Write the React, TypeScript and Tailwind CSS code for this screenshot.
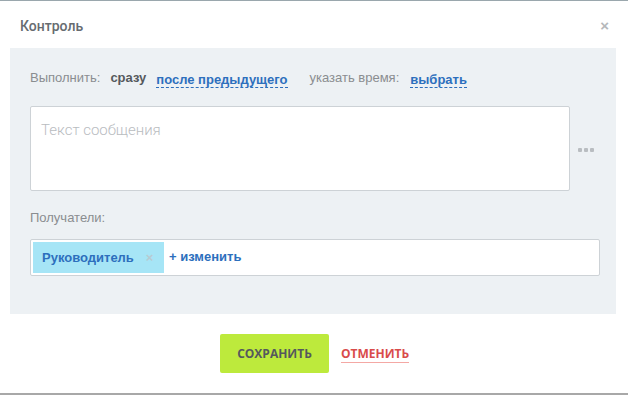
import React from "react";

const App: React.FC = () => {
  return (
    <div className="w-[628px] h-[395px] bg-white flex flex-col overflow-hidden font-['Liberation_Sans',Arial,sans-serif]">
      <div className="h-px bg-[#9aa7ad]" />
      <div className="flex items-center justify-between h-[47px] pl-5 pr-[19px]">
        <span className="font-['Roboto',sans-serif] font-[500] text-[14px] text-[#666b70] pt-[3px]">
          Контроль
        </span>
        <span className="text-[15px] leading-none text-[#b5b8bb] font-bold pt-[2px]">×</span>
      </div>

      <div className="mx-[10px] w-[606px] h-[266px] bg-[#edf1f4] pl-5 pt-[20px] flex flex-col">
        <div className="flex items-center text-[13px] h-[20px]">
          <span className="text-[#8a8d90]">Выполнить:</span>
          <span className="ml-[10px] font-bold text-[#55595d]">сразу</span>
          <span className="ml-[10px] font-bold text-[#2d6fbd] border-b border-dashed border-[#2d6fbd] leading-[15px] mt-[3px]">
            после предыдущего
          </span>
          <span className="ml-[22px] text-[#8a8d90]">указать время:</span>
          <span className="ml-[11px] font-bold text-[#2d6fbd] border-b border-dashed border-[#2d6fbd] leading-[15px] mt-[3px]">
            выбрать
          </span>
        </div>

        <div className="flex items-center mt-[18px]">
          <div className="w-[540px] h-[85px] bg-white border border-[#cdd2d6] rounded-[2px] pl-[10px] pt-[11px]">
            <span className="font-['Roboto',sans-serif] font-light text-[15px] text-[#b9bcbf]">
              Текст сообщения
            </span>
          </div>
          <div className="ml-[8px] flex gap-[2px] mt-[2px]">
            <span className="w-[4px] h-[4px] bg-[#b9bdc1] rounded-[1px]" />
            <span className="w-[4px] h-[4px] bg-[#b9bdc1] rounded-[1px]" />
            <span className="w-[4px] h-[4px] bg-[#b9bdc1] rounded-[1px]" />
          </div>
        </div>

        <div className="mt-[17px] text-[13px] text-[#8a8d90] h-[16px]">Получатели:</div>

        <div className="mt-[15px] w-[570px] h-[37px] bg-white border border-[#cdd2d6] rounded-[2px] flex items-center pl-[2px]">
          <div className="h-[31px] w-[131px] bg-[#a6e5f6] flex items-center pl-[9px]">
            <span className="font-bold text-[13px] text-[#2d6fbd] mt-[1px]">Руководитель</span>
            <span className="ml-[12px] text-[13px] leading-none text-[#b8cbd2] font-bold">×</span>
          </div>
          <span className="ml-[5px] font-bold text-[13px] text-[#2d6fbd] mb-[1px]">+ изменить</span>
        </div>
      </div>

      <div className="flex items-center mt-[20px] pl-[220px] h-[39px]">
        <button className="w-[109px] h-[39px] bg-[#bdea3c] rounded-[2px] font-['Open_Sans',sans-serif] font-bold text-[12px] text-[#55595d]">
          СОХРАНИТЬ
        </button>
        <span className="ml-[12px] font-['Open_Sans',sans-serif] font-bold text-[12px] text-[#d94b4b] border-b border-[#f4a8a4] leading-[16px] mt-[2px]">
          ОТМЕНИТЬ
        </span>
      </div>

      <div className="flex-1" />
      <div className="h-[2px] bg-[#a8a8a8]" />
    </div>
  );
};

export default App;
